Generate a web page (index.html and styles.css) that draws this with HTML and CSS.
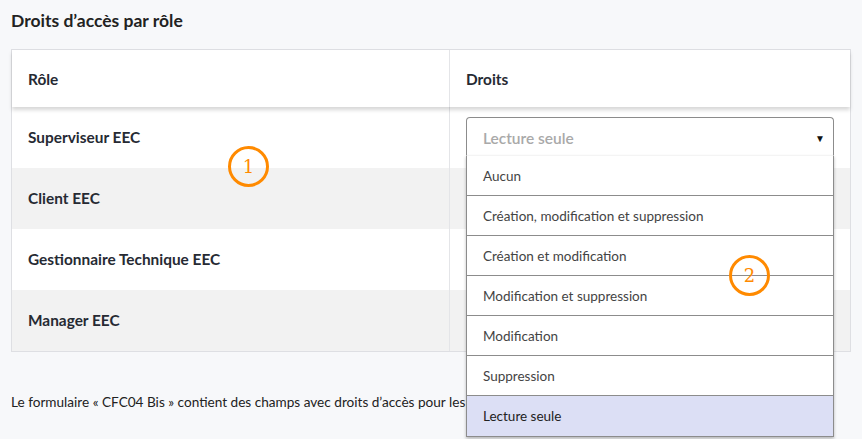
FILE: index.html
```html
<!DOCTYPE html>
<html lang="fr">
<head>
<meta charset="utf-8">
<link rel="stylesheet" href="styles.css">
</head>
<body>
<div class="page">
  <h2 class="title">Droits d’accès par rôle</h2>
  <div class="table">
    <div class="thead">
      <div class="cell c1">Rôle</div>
      <div class="cell c2">Droits</div>
    </div>
    <div class="row">
      <div class="cell c1">Superviseur EEC</div>
      <div class="cell c2">
        <div class="select-wrap">
          <div class="select"><span class="placeholder">Lecture seule</span><span class="arrow">▼</span></div>
          <ul class="menu">
            <li>Aucun</li>
            <li>Création, modification et suppression</li>
            <li>Création et modification</li>
            <li>Modification et suppression</li>
            <li>Modification</li>
            <li>Suppression</li>
            <li class="active">Lecture seule</li>
          </ul>
        </div>
      </div>
    </div>
    <div class="row alt">
      <div class="cell c1">Client EEC</div>
      <div class="cell c2"></div>
    </div>
    <div class="row">
      <div class="cell c1">Gestionnaire Technique EEC</div>
      <div class="cell c2"></div>
    </div>
    <div class="row alt">
      <div class="cell c1">Manager EEC</div>
      <div class="cell c2"></div>
    </div>
  </div>
  <p class="note">Le formulaire « CFC04 Bis » contient des champs avec droits d’accès pour les</p>
  <div class="badge b1">1</div>
  <div class="badge b2">2</div>
</div>
</body>
</html>
```

FILE: styles.css
```css
* { box-sizing: border-box; }
html, body { margin: 0; padding: 0; }
body {
  background: #f7f8fa;
  font-family: Lato, "Open Sans", sans-serif;
  color: #222;
  width: 862px;
  height: 439px;
  overflow: hidden;
}
.page {
  position: relative;
  padding: 10px 11px 0 11px;
}
.title {
  margin: 0 0 18px 0;
  font-size: 17.5px;
  font-weight: 700;
  line-height: 21px;
  color: #222;
}
.table {
  width: 840px;
  border: 1px solid #dedfe3;
  background: #fff;
}
.thead {
  display: flex;
  height: 57px;
  background: #fff;
  box-shadow: 0 3px 4px rgba(0,0,0,0.16);
  position: relative;
  z-index: 1;
}
.row {
  display: flex;
  height: 61px;
  background: #fff;
}
.row.alt { background: #f2f2f2; }
.cell {
  font-size: 15.4px;
  font-weight: 700;
  color: #262a33;
  display: flex;
  align-items: center;
}
.c1 {
  width: 438px;
  padding-left: 16px;
  border-right: 1px solid #e4e5e8;
}
.c2 {
  flex: 1;
  padding-left: 16px;
  position: relative;
}
.row .c1 { align-items: flex-start; padding-top: 21px; }
.row .c2 { align-items: flex-start; padding-top: 10px; }
.select-wrap {
  position: relative;
  width: 368px;
}
.select {
  height: 40px;
  border: 1px solid #8c8c8c;
  border-bottom: none;
  border-radius: 4px 4px 0 0;
  background: #fff;
  display: flex;
  align-items: center;
  justify-content: space-between;
  padding: 0 8px 0 16px;
}
.placeholder {
  font-size: 15.5px;
  font-weight: 600;
  color: #a9a9a9;
}
.arrow {
  font-size: 10px;
  color: #111;
}
.menu {
  position: absolute;
  left: 0;
  top: 38px;
  width: 368px;
  margin: 0;
  padding: 0;
  list-style: none;
  background: #fff;
  border: 1px solid #8c8c8c;
  border-top: 1px solid #f4f4f4;
  box-shadow: 0 2px 3px rgba(0,0,0,0.25);
  z-index: 5;
}
.menu li {
  height: 40px;
  display: flex;
  align-items: center;
  padding-left: 16px;
  font-size: 13.5px;
  font-weight: 400;
  color: #444;
  border-bottom: 1px solid #8c8c8c;
}
.menu li:last-child { border-bottom: none; height: 40px; }
.menu li.active { background: #dcdff5; color: #222; }
.note {
  margin: 42px 0 0 0;
  font-size: 13.6px;
  color: #222;
}
.badge {
  position: absolute;
  width: 41px;
  height: 41px;
  border: 3px solid #ff8a00;
  border-radius: 50%;
  color: #ff8a00;
  font-family: "DejaVu Serif", "Liberation Serif", serif;
  font-size: 18px;
  display: flex;
  align-items: center;
  justify-content: center;
  z-index: 10;
}
.b1 { left: 228px; top: 146px; }
.b2 { left: 729px; top: 255px; }
```
